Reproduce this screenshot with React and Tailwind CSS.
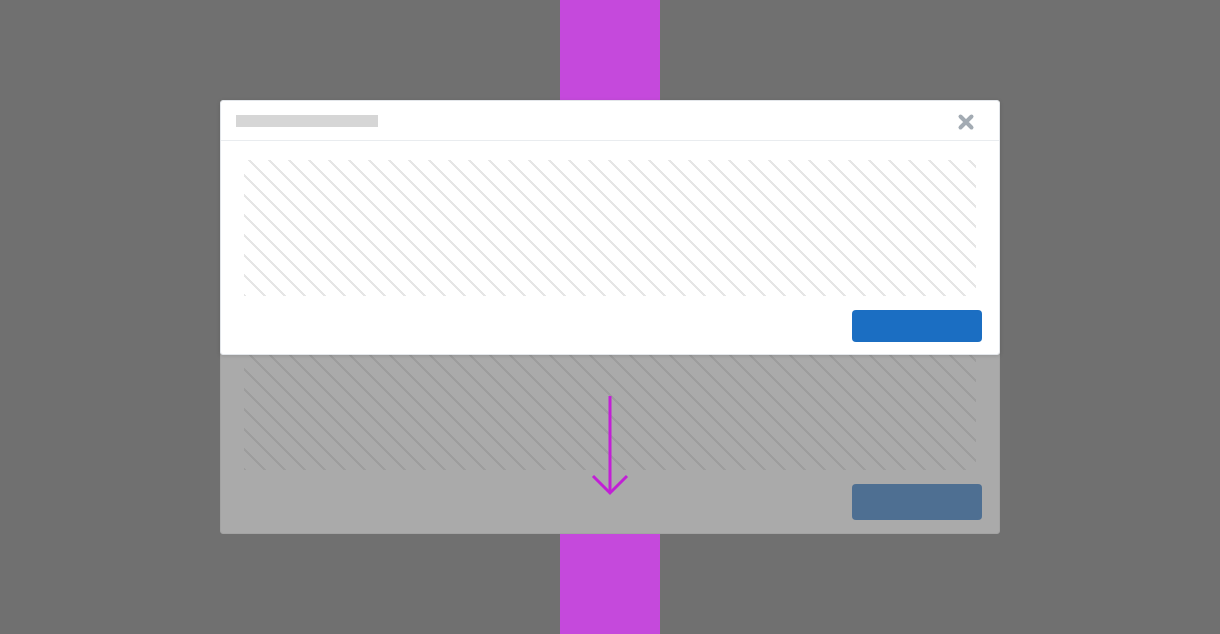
import React from 'react';

function CloseIcon() {
  return (
    <svg width="18" height="18" viewBox="0 0 18 18" className="mt-[2px] block">
      <path d="M3.5 3.5 L14.5 14.5 M14.5 3.5 L3.5 14.5" stroke="#a3abb3" strokeWidth="4" strokeLinecap="round" />
    </svg>
  );
}

function DownArrow() {
  return (
    <svg width="40" height="104" viewBox="0 0 40 104" className="block">
      <path d="M20 0 L20 97" stroke="#c21fd6" strokeWidth="3" />
      <path d="M3 80 L20 97 L37 80" stroke="#c21fd6" strokeWidth="3" fill="none" />
    </svg>
  );
}

export default function App() {
  return (
    <div className="relative h-[634px] w-[1220px] overflow-hidden bg-[#707070] font-['Liberation_Sans',sans-serif]">
      {/* magenta column behind the dialogs */}
      <div className="mx-auto h-full w-[100px] bg-[#c549dc]" />

      {/* ghost dialog, moved down */}
      <div className="absolute left-[220px] top-[276px] flex h-[258px] w-[780px] flex-col rounded-[3px] border border-[#a3a3a3] bg-[#aaaaaa]">
        <div className="h-[40px] border-b border-[#a3a3a3]" />
        <div className="px-[23px] pt-[17px]">
          <div className="h-[136px] bg-[repeating-linear-gradient(45deg,#9d9d9d_0px,#9d9d9d_2px,transparent_2px,transparent_14.14px)]" />
        </div>
        <div className="flex justify-end pr-[17px] pt-[14px]">
          <div className="h-[36px] w-[130px] rounded-[4px] bg-[#4e6f92]" />
        </div>
      </div>

      {/* arrow */}
      <div className="absolute left-[590px] top-[396px]">
        <DownArrow />
      </div>

      {/* dialog */}
      <div className="absolute left-[220px] top-[100px] w-[780px] rounded-[3px] border border-[#e3e6ea] bg-white shadow-[0_1px_4px_rgba(0,0,0,0.12)]">
        <div className="flex h-[40px] items-center justify-between border-b border-[#e9ecef] pl-[15px] pr-[24px]">
          <div className="h-[12px] w-[142px] bg-[#d6d6d6]" />
          <CloseIcon />
        </div>
        <div className="px-[23px] pt-[19px]">
          <div className="h-[136px] bg-[repeating-linear-gradient(45deg,#e6e6e6_0px,#e6e6e6_2px,transparent_2px,transparent_14.14px)]" />
        </div>
        <div className="flex justify-end pb-[12px] pr-[17px] pt-[14px]">
          <div className="h-[32px] w-[130px] rounded-[4px] bg-[#1b6ec2]" />
        </div>
      </div>
    </div>
  );
}
